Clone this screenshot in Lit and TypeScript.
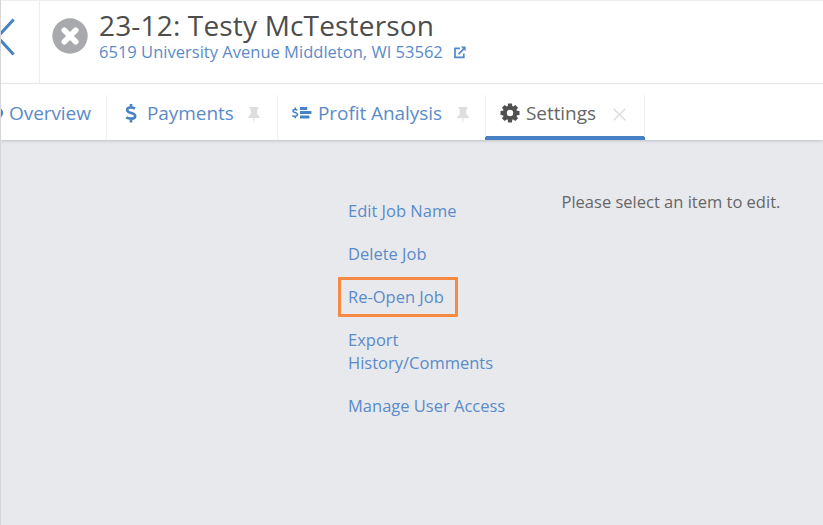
import { LitElement, html, svg, css } from "lit";
import { customElement } from "lit/decorators.js";

const pin = html`<svg class="pin" viewBox="0 0 12 17" width="12" height="17">
  <path d="M1.6 0h8.8v2.2H9.2v5.2c1.7.7 2.7 1.9 2.7 3.6H6.7L6 16.6 5.3 11H.1c0-1.7 1-2.9 2.7-3.6V2.2H1.6z" />
</svg>`;

const teeth = [0, 45, 90, 135, 180, 225, 270, 315].map(
  (a) => svg`<path d="M-2.4-6.2-1.9-9.5h3.8l.5 3.3z" transform="rotate(${a})" />`
);

@customElement("app-root")
export class AppRoot extends LitElement {
  static styles = css`
    :host {
      display: block;
      box-sizing: border-box;
      height: 525px;
      overflow: hidden;
      background: #e8e9ed;
      border-left: 1px solid #d6d6d9;
      font-family: "Open Sans", "Noto Sans", sans-serif;
      color: #666;
    }
    * {
      box-sizing: border-box;
    }
    svg {
      display: block;
      flex: none;
    }
    a {
      color: #5b8bc9;
      text-decoration: none;
      white-space: nowrap;
    }
    header {
      display: flex;
      height: 84px;
      background: #fff;
      border-top: 1px solid #ededed;
      border-bottom: 1px solid #ececec;
    }
    .back {
      width: 39px;
      height: 82px;
      border-right: 1px solid #eee;
      padding-top: 17px;
    }
    .status {
      margin: 17px 11px 0 12px;
    }
    .title {
      margin: 0;
      padding-top: 8px;
      font-size: 28px;
      line-height: 32px;
      letter-spacing: 0.17px;
      font-weight: 400;
      color: #4d4d4d;
      white-space: nowrap;
    }
    .address {
      display: flex;
      align-items: center;
      margin-top: 1px;
      font-size: 16.5px;
      line-height: 20px;
      letter-spacing: 0.015px;
    }
    .address svg {
      margin-left: 11px;
    }
    nav {
      display: flex;
      height: 56px;
      padding-top: 11px;
      background: #fff;
      box-shadow: 0 1px 3px rgba(0, 0, 0, 0.18);
      position: relative;
    }
    .tab {
      display: flex;
      align-items: center;
      height: 45px;
      padding-bottom: 8px;
      border-right: 1px solid #f0f0f0;
      font-size: 19px;
      line-height: 26px;
      letter-spacing: -0.07px;
    }
    .tab a,
    .tab span {
      margin-bottom: 2px;
    }
    .overview { width: 106px; }
    .overview a { margin-left: 5px; }
    .payments { width: 171px; padding-left: 18px; }
    .payments a { margin-left: 10px; }
    .profit { width: 207px; padding-left: 14px; border-right: 0; }
    .profit a { margin-left: 5px; }
    .pin { margin: 4px 17px 0 auto; fill: #dedede; }
    .profit .pin { margin-right: 16px; }
    .settings {
      width: 160px;
      padding-left: 14px;
      padding-bottom: 4px;
      border-left: 1px solid #f0f0f0;
      border-bottom: 0;
      padding-bottom: 8px;
      background: linear-gradient(#4682c4, #4682c4) border-box bottom / 100% 4px no-repeat;
      border-image: linear-gradient(#f0f0f0 41px, #4682c4 41px) 1;
    }
    .settings svg { margin-bottom: 2px; }
    .settings span { margin-left: 6px; }
    .settings .close { margin: 2px 18px 0 auto; }
    main {
      display: flex;
      font-size: 16.5px;
      line-height: 23px;
    }
    .menu {
      display: flex;
      flex-direction: column;
      align-items: flex-start;
      width: 213.5px;
      margin-left: 347px;
      padding-top: 59px;
      gap: 20px;
    }
    .menu a { white-space: pre-line; }
    .menu .marked {
      border: 3px solid #f68a42;
      border-radius: 1px;
      padding: 5px 11px 6px 7px;
      margin: -8px 0 -9px -10px;
    }
    .hint {
      margin: 50px 0 0;
      white-space: nowrap;
    }
  `;

  render() {
    return html`
      <header>
        <div class="back">
          <svg width="16" height="38" viewBox="0 0 16 38" fill="none" stroke="#4682c4" stroke-width="3">
            <path d="M12.6 1.5-3.4 19 12.6 36.5" />
          </svg>
        </div>
        <svg class="status" width="36" height="36" viewBox="0 0 36 36">
          <circle cx="18" cy="18" r="17.7" fill="#a7a9ac" />
          <path d="M12.3 12.3 23.7 23.7M23.7 12.3 12.3 23.7" stroke="#fff" stroke-width="5.6" stroke-linecap="round" />
        </svg>
        <div>
          <h1 class="title">23-12: Testy McTesterson</h1>
          <div class="address">
            <a>6519 University Avenue Middleton, WI 53562</a>
            <svg width="12" height="13" viewBox="0 0 12 13" fill="none" stroke="#4f87c8" stroke-width="1.7">
              <path d="M6 2.4H1v9h8.8V7.5M4.6 8.2l5.6-5.8" />
              <path d="M6.8.4H11.6v4.9z" fill="#4f87c8" stroke="none" />
            </svg>
          </div>
        </div>
      </header>
      <nav>
        <div class="tab overview">
          <svg width="3" height="14" viewBox="0 0 3 14"><circle cx="-4.5" cy="6" r="6.5" fill="#4682c4" /></svg>
          <a>Overview</a>
        </div>
        <div class="tab payments">
          <svg width="12" height="20" viewBox="0 0 12 20" fill="none" stroke="#4682c4" stroke-width="2.6">
            <path d="M10 4.6C8.3 3.5 2.2 2.4 2.2 5.9c0 4 8 2.2 8 6.1 0 3.8-6.8 2.8-9 1.4M6 0v3M6 15v3.4" />
          </svg>
          <a>Payments</a>${pin}
        </div>
        <div class="tab profit">
          <svg width="21" height="14" viewBox="0 0 21 14">
            <path d="M5.4 3.1C4.4 2.5 1 2 1 3.9c0 2 4.5 1.4 4.5 3.6S2 9.6.4 8.7M3.2.6v2M3.2 9.3v2" fill="none" stroke="#4682c4" stroke-width="1.6" />
            <path d="M8 0h7.2v3H8zM8 4.1h11.4v3H8zM8 8.5h9.4v3H8z" fill="#4682c4" />
          </svg>
          <a>Profit Analysis</a>${pin}
        </div>
        <div class="tab settings">
          <svg width="20" height="20" viewBox="-10 -10 20 20" fill="#505050">
            ${teeth}
            <circle r="5.2" fill="none" stroke="#505050" stroke-width="4" />
          </svg>
          <span>Settings</span>
          <svg class="close" width="13" height="13" viewBox="0 0 13 13" stroke="#dcdcdc" stroke-width="1.4">
            <path d="M.7.7 12.3 12.3M12.3.7.7 12.3" />
          </svg>
        </div>
      </nav>
      <main>
        <div class="menu">
          <a>Edit Job Name</a>
          <a>Delete Job</a>
          <a class="marked">Re-Open Job</a>
          <a>Export\nHistory/Comments</a>
          <a>Manage User Access</a>
        </div>
        <p class="hint">Please select an item to edit.</p>
      </main>
    `;
  }
}
